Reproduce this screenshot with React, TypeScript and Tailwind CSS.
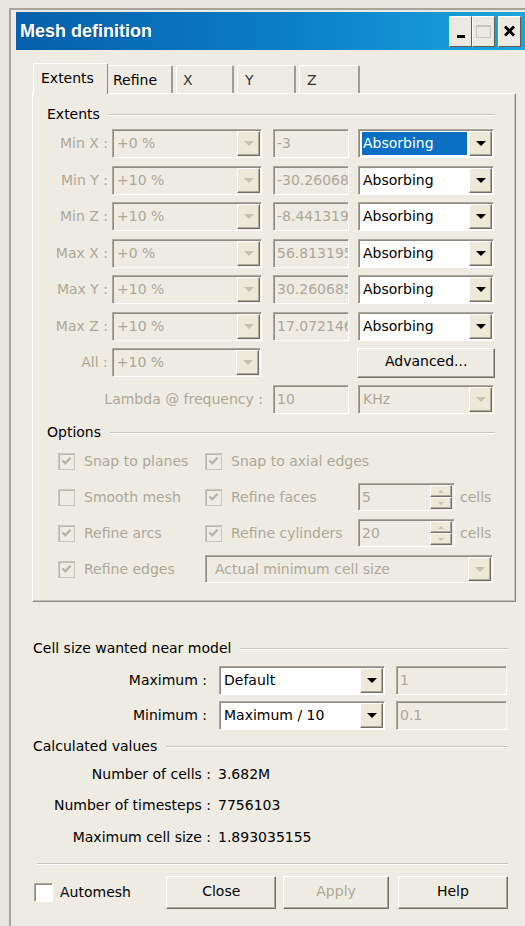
import React from "react";

// 3D edge styles in the classic Windows look
const raised =
  "border border-t-white border-l-white border-r-[#716f64] border-b-[#716f64] shadow-[inset_-1px_-1px_0_#aca899]";
const sunken =
  "border border-t-[#aca899] border-l-[#aca899] border-r-white border-b-white shadow-[inset_1px_1px_0_#8d8b82]";

const GroupHeader = ({ label, className = "" }: { label: string; className?: string }) => (
  <div className={`flex items-center h-[17px] ${className}`}>
    <span className="whitespace-nowrap">{label}</span>
    <div className="flex-1 ml-[9px] border-t border-t-[#c8c5ba] border-b border-b-white" />
  </div>
);

const Arrow = ({ disabled }: { disabled?: boolean }) => (
  <div className={`w-[23px] h-full shrink-0 flex items-center justify-center bg-[#ece9d8] ${raised}`}>
    <div
      className={`w-0 h-0 border-l-[5px] border-r-[5px] border-t-[5px] border-l-transparent border-r-transparent ${
        disabled ? "border-t-[#c4c1b6]" : "border-t-black"
      }`}
    />
  </div>
);

const Combo = ({
  value,
  className = "",
  disabled,
  selected,
}: {
  value: string;
  className?: string;
  disabled?: boolean;
  selected?: boolean;
}) => (
  <div className={`flex h-full p-[1px] ${sunken} ${disabled ? "bg-[#eeebe3]" : "bg-white"} ${className}`}>
    <div className="flex-1 flex items-center overflow-hidden whitespace-nowrap pl-[2px] pr-[2px]">
      <span
        className={`flex-1 h-[23px] flex items-center pl-[1px] ${
          selected ? "bg-[#0b70c4] text-white" : disabled ? "text-[#aca899]" : "text-black"
        }`}
      >
        {value}
      </span>
    </div>
    <Arrow disabled={disabled} />
  </div>
);

const Field = ({ value, className = "" }: { value: string; className?: string }) => (
  <div
    className={`h-full flex items-center pl-[3px] overflow-hidden whitespace-nowrap bg-[#eeebe3] text-[#aca899] ${sunken} ${className}`}
  >
    {value}
  </div>
);

const Spin = ({ value }: { value: string }) => (
  <div className={`w-[97px] h-full flex p-[1px] bg-[#eeebe3] ${sunken}`}>
    <div className="flex-1 flex items-center pl-[2px] text-[#aca899]">{value}</div>
    <div className="w-[22px] flex flex-col mr-[1px]">
      <div className={`flex-1 flex items-center justify-center bg-[#ece9d8] ${raised}`}>
        <div className="w-0 h-0 border-l-[3px] border-r-[3px] border-b-[3px] border-l-transparent border-r-transparent border-b-[#c4c1b6]" />
      </div>
      <div className={`flex-1 flex items-center justify-center bg-[#ece9d8] ${raised}`}>
        <div className="w-0 h-0 border-l-[3px] border-r-[3px] border-t-[3px] border-l-transparent border-r-transparent border-t-[#c4c1b6]" />
      </div>
    </div>
  </div>
);

const Check = ({ checked, disabled = true }: { checked?: boolean; disabled?: boolean }) => (
  <div
    className={`w-[17px] h-[17px] shrink-0 flex items-center justify-center border ${
      disabled ? "border-[#c9c6bb] bg-[#eeebe3]" : "border-[#7f9db9] bg-white"
    } shadow-[inset_1px_1px_0_#b9b6ab]`}
  >
    {checked && (
      <svg width="11" height="10" viewBox="0 0 11 10">
        <path d="M1.5 4.5 L4.3 7.3 L9.5 1.8" fill="none" stroke="#b5b2a7" strokeWidth="2.2" />
      </svg>
    )}
  </div>
);

const Option = ({ label, checked, className = "" }: { label: string; checked?: boolean; className?: string }) => (
  <div className={`flex items-center shrink-0 ${className}`}>
    <Check checked={checked} />
    <span className="ml-[9px] text-[#aca899] whitespace-nowrap">{label}</span>
  </div>
);

const Button = ({
  label,
  className = "",
  disabled,
}: {
  label: string;
  className?: string;
  disabled?: boolean;
}) => (
  <div
    className={`h-full flex items-center justify-center pb-[3px] bg-[#efece4] ${raised} ${
      disabled ? "text-[#aca899]" : "text-black"
    } ${className}`}
  >
    {label}
  </div>
);

const extentRows = [
  { label: "Min X :", pct: "+0 %", value: "-3", selected: true },
  { label: "Min Y :", pct: "+10 %", value: "-30.26068" },
  { label: "Min Z :", pct: "+10 %", value: "-8.441319" },
  { label: "Max X :", pct: "+0 %", value: "56.813195" },
  { label: "Max Y :", pct: "+10 %", value: "30.260685" },
  { label: "Max Z :", pct: "+10 %", value: "17.072146" },
];

const TitleButton = ({ children, className = "" }: { children: React.ReactNode; className?: string }) => (
  <div
    className={`w-[23px] h-[31px] flex items-center justify-center bg-[#ece9e0] border border-t-white border-l-white border-r-[#5e5c54] border-b-[#5e5c54] ${className}`}
  >
    {children}
  </div>
);

export default function App() {
  return (
    <div className="w-[525px] h-[926px] overflow-hidden bg-[#e9e7e0] pl-[9px] pt-[8px] font-['DejaVu_Sans',sans-serif] text-[14px] text-black">
      <div className="h-full border-l-[2px] border-t-[2px] border-[#a6a49c] pl-[5px] pt-[2px] bg-[#eeebe3]">
        {/* title bar */}
        <div className="h-[38px] flex items-center bg-linear-to-r from-[#0760ab] via-[#0a7cc6] to-[#1aa6df] pl-[4px] pr-[4px]">
          <span className="flex-1 text-white font-bold text-[18px] font-['Liberation_Sans',sans-serif] [text-shadow:1px_1px_0_#0b4f8a]">
            Mesh definition
          </span>
          <TitleButton>
            <div className="w-[8px] h-[3px] bg-black mt-[10px]" />
          </TitleButton>
          <TitleButton>
            <div className="w-[15px] h-[13px] border border-[#c6c4bc] border-t-[2px]" />
          </TitleButton>
          <TitleButton className="ml-[3px]">
            <svg width="13" height="12" viewBox="0 0 13 12">
              <path d="M2 1.5 L11 10.5 M11 1.5 L2 10.5" stroke="#000" strokeWidth="2.8" />
            </svg>
          </TitleButton>
        </div>

        <div className="pl-[16px] pr-[9px]">
          {/* tabs */}
          <div className="mt-[12px] ml-[1px] h-[31px] flex items-end">
            <div className="relative z-10 w-[75px] h-[31px] -mb-[1px] bg-[#eeebe3] border-l border-t border-white border-r border-r-[#8b897f] rounded-t-[2px] pl-[7px] pt-[4px]">
              Extents
            </div>
            <div className="w-[65px] h-[28px] border-t border-white border-r-2 border-r-[#9e9c93] rounded-t-[2px] pl-[5px] pt-[4px]">
              Refine
            </div>
            <div className="ml-[3px] w-[58px] h-[28px] border-l border-t border-white border-r-2 border-r-[#9e9c93] rounded-t-[2px] pl-[6px] pt-[4px] text-[#333]">
              X
            </div>
            <div className="ml-[3px] w-[59px] h-[28px] border-l border-t border-white border-r-2 border-r-[#9e9c93] rounded-t-[2px] pl-[7px] pt-[4px] text-[#333]">
              Y
            </div>
            <div className="ml-[3px] w-[61px] h-[28px] border-l border-t border-white border-r-2 border-r-[#9e9c93] rounded-t-[2px] pl-[7px] pt-[4px] text-[#333]">
              Z
            </div>
          </div>

          {/* tab page */}
          <div className="h-[509px] bg-[#eeebe3] border-l border-t border-white border-r border-b border-r-[#8b897f] border-b-[#8b897f] shadow-[inset_-1px_-1px_0_#c5c2b8] pl-[14px] pr-[20px] pt-[12px]">
            <GroupHeader label="Extents" />
            <div className="mt-[6px] flex flex-col gap-[7.5px]">
              {extentRows.map((r) => (
                <div key={r.label} className="flex items-center h-[29px]">
                  <span className="w-[61px] text-right text-[#aca899] whitespace-nowrap">{r.label}</span>
                  <Combo value={r.pct} disabled className="ml-[4px] w-[150px]" />
                  <Field value={r.value} className="ml-[11px] w-[76px]" />
                  <Combo value="Absorbing" selected={r.selected} className="ml-[9px] w-[136px]" />
                </div>
              ))}
              <div className="flex items-center h-[29px]">
                <span className="w-[61px] text-right text-[#aca899]">All :</span>
                <Combo value="+10 %" disabled className="ml-[4px] w-[150px]" />
                <div className="ml-[96px] w-[138px] h-[30px]">
                  <Button label="Advanced..." />
                </div>
              </div>
              <div className="flex items-center h-[29px]">
                <span className="w-[216px] text-right text-[#aca899] whitespace-nowrap">Lambda @ frequency :</span>
                <Field value="10" className="ml-[10px] w-[76px]" />
                <Combo value="KHz" disabled className="ml-[9px] w-[136px]" />
              </div>
            </div>

            <GroupHeader label="Options" className="mt-[10.5px]" />
            <div className="mt-[6px] pl-[11px] flex flex-col gap-[8px]">
              <div className="flex items-center h-[28px]">
                <Option label="Snap to planes" checked className="w-[147px]" />
                <Option label="Snap to axial edges" checked />
              </div>
              <div className="flex items-center h-[28px]">
                <Option label="Smooth mesh" className="w-[147px]" />
                <Option label="Refine faces" checked className="w-[153px]" />
                <Spin value="5" />
                <span className="ml-[5px] text-[#aca899]">cells</span>
              </div>
              <div className="flex items-center h-[28px]">
                <Option label="Refine arcs" checked className="w-[147px]" />
                <Option label="Refine cylinders" checked className="w-[153px]" />
                <Spin value="20" />
                <span className="ml-[5px] text-[#aca899]">cells</span>
              </div>
              <div className="flex items-center h-[28px]">
                <Option label="Refine edges" checked className="w-[147px]" />
                <Combo value="Actual minimum cell size" disabled className="w-[288px] pl-[6px]" />
              </div>
            </div>
          </div>

          {/* lower section */}
          <div className="ml-[1px] mr-[8px]">
            <GroupHeader label="Cell size wanted near model" className="mt-[38px]" />
            <div className="mt-[9px] flex flex-col gap-[6px]">
              <div className="flex items-center h-[29px]">
                <span className="w-[174px] text-right">Maximum :</span>
                <Combo value="Default" className="ml-[12px] w-[166px]" />
                <Field value="1" className="ml-[11px] w-[111px]" />
              </div>
              <div className="flex items-center h-[29px]">
                <span className="w-[174px] text-right">Minimum :</span>
                <Combo value="Maximum / 10" className="ml-[12px] w-[166px]" />
                <Field value="0.1" className="ml-[11px] w-[111px]" />
              </div>
            </div>

            <GroupHeader label="Calculated values" className="mt-[8px]" />
            <div className="mt-[9px] flex flex-col gap-[11.5px]">
              {[
                ["Number of cells :", "3.682M"],
                ["Number of timesteps :", "7756103"],
                ["Maximum cell size :", "1.893035155"],
              ].map(([k, v]) => (
                <div key={k} className="flex items-center h-[20px]">
                  <span className="w-[178px] text-right whitespace-nowrap">{k}</span>
                  <span className="ml-[7px]">{v}</span>
                </div>
              ))}
            </div>

            <div className="mt-[16px] ml-[4px] border-t border-t-[#c8c5ba] border-b border-b-white" />

            <div className="mt-[11px] h-[33px] flex items-center">
              <div className="w-[134px] flex items-center pl-[1px]">
                <div className={`w-[19px] h-[19px] bg-white ${sunken}`} />
                <span className="ml-[7px]">Automesh</span>
              </div>
              <Button label="Close" className="w-[111px]" />
              <Button label="Apply" disabled className="ml-[7px] w-[106px]" />
              <Button label="Help" className="ml-[9px] w-[111px]" />
            </div>
          </div>
        </div>
      </div>
    </div>
  );
}
